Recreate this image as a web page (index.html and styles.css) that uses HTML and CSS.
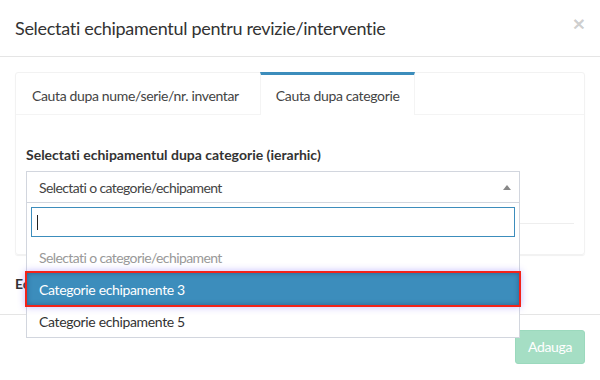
FILE: index.html
```html
<html>
<head>
    <link rel="stylesheet" href="styles.css">
</head>
<body>
    <div class="modal">
        <!--Cabecera del modal-->
        <div class="modal-header">
            <h4 class="modal-title">Selectati echipamentul pentru revizie/interventie</h4>
            <button class="close">&times;</button>
        </div>

        <div class="modal-body">
            <div class="tabs-card">
                <ul class="nav-tabs">
                    <li>Cauta dupa nume/serie/nr. inventar</li>
                    <li class="active">Cauta dupa categorie</li>
                </ul>
                <div class="tab-content">
                    <label class="field-label">Selectati echipamentul dupa categorie (ierarhic)</label>
                    <div class="select-wrap">
                        <div class="select">
                            Selectati o categorie/echipament
                            <span class="arrow"></span>
                        </div>
                        <!--Lista desplegada-->
                        <div class="dropdown">
                            <div class="search">
                                <div class="search-field"><span class="caret"></span></div>
                            </div>
                            <ul class="results">
                                <li class="placeholder">Selectati o categorie/echipament</li>
                                <li class="highlighted">Categorie echipamente 3</li>
                                <li>Categorie echipamente 5</li>
                            </ul>
                        </div>
                    </div>
                    <hr class="divider">
                </div>
            </div>
            <label class="field-label below">Echipamente selectate</label>
        </div>

        <div class="modal-footer">
            <button class="btn-add">Adauga</button>
        </div>
    </div>
</body>
</html>
```

FILE: styles.css
```css
/*Estilos del modal de seleccion de equipamiento*/
body {
    margin: 0;
    background: white;
    font-family: "Lato", "Liberation Sans", sans-serif;
    font-size: 14px;
    letter-spacing: -0.35px;
    font-variant-ligatures: none;
    color: #333;
}

.modal {
    width: 600px;
}

.modal-header {
    display: flex;
    align-items: flex-start;
    justify-content: space-between;
    padding: 15px;
    border-bottom: 1px solid #e5e5e5;
}
.modal-title {
    margin: 0;
    padding-top: 1px;
    font-size: 18px;
    font-weight: normal;
    line-height: 25px;
    letter-spacing: -0.3px;
}
.close {
    background: none;
    border: none;
    padding: 0;
    margin-top: -2px;
    font-family: "Liberation Sans", sans-serif;
    font-size: 21px;
    font-weight: bold;
    line-height: 1;
    color: rgba(0, 0, 0, 0.2);
}

.modal-body {
    padding: 15px 15px 15px 15px;
}

.tabs-card {
    border: 1px solid #f2f2f2;
    border-radius: 3px;
    box-shadow: 0 1px 1px rgba(0, 0, 0, 0.06);
}
.nav-tabs {
    display: flex;
    list-style: none;
    margin: -1px 0 0 0;
    padding: 0;
    border-bottom: 1px solid #f4f4f4;
}
.nav-tabs li {
    padding: 11px 15px 9px 15px;
    line-height: 20px;
    border-top: 3px solid transparent;
    border-left: 1px solid transparent;
    border-right: 1px solid transparent;
    margin-right: 5px;
    margin-bottom: -1px;
    color: #444;
}
.nav-tabs li.active {
    border-top-color: #3c8dbc;
    border-left-color: #f4f4f4;
    border-right-color: #f4f4f4;
    background: white;
}

.tab-content {
    padding: 30px 10px 10px 10px;
}
.field-label {
    display: block;
    font-weight: bold;
    letter-spacing: 0;
    line-height: 20px;
    margin-bottom: 6px;
}
.field-label.below {
    margin: 19px 0 5px 0;
}

.select-wrap {
    position: relative;
    width: 494px;
}
.select {
    position: relative;
    height: 30px;
    line-height: 31px;
    border: 1px solid #d2d6de;
    padding: 0 12px;
    color: #444;
    letter-spacing: -0.6px;
}
.arrow {
    position: absolute;
    right: 8px;
    top: 13px;
    border-style: solid;
    border-width: 0 4px 5px 4px;
    border-color: transparent transparent #888 transparent;
}

.dropdown {
    position: absolute;
    top: 32px;
    left: 0;
    right: 0;
    background: white;
    border: 1px solid #d2d6de;
    border-top: none;
    z-index: 10;
}
.search {
    padding: 4px;
}
.search-field {
    height: 28px;
    border: 1px solid #3c8dbc;
    padding-left: 5px;
    display: flex;
    align-items: center;
}
.caret {
    width: 1px;
    height: 15px;
    background: #222;
}
.results {
    list-style: none;
    margin: 0;
    padding: 0;
}
.results li {
    padding: 7px 12px 5px 12px;
    line-height: 20px;
    color: #333;
}
.results li.placeholder {
    color: #999;
    letter-spacing: -0.6px;
}
.results li.highlighted {
    background: #3c8dbc;
    color: white;
    outline: 2px solid #f2231a;
    box-shadow: inset 0 0 5px rgba(20, 40, 90, 0.45), 0 0 7px 2px rgba(120, 100, 255, 0.45);
}

.divider {
    border: none;
    border-top: 1px solid #eee;
    margin: 20px 0 20px 0;
}

.modal-footer {
    border-top: 1px solid #e5e5e5;
    padding: 15px;
    text-align: right;
}
.btn-add {
    font-family: inherit;
    font-size: 14px;
    letter-spacing: inherit;
    color: white;
    background: #a5dec4;
    border: 1px solid #9bd9bd;
    border-radius: 3px;
    padding: 6px 12px;
    line-height: 20px;
}
```
